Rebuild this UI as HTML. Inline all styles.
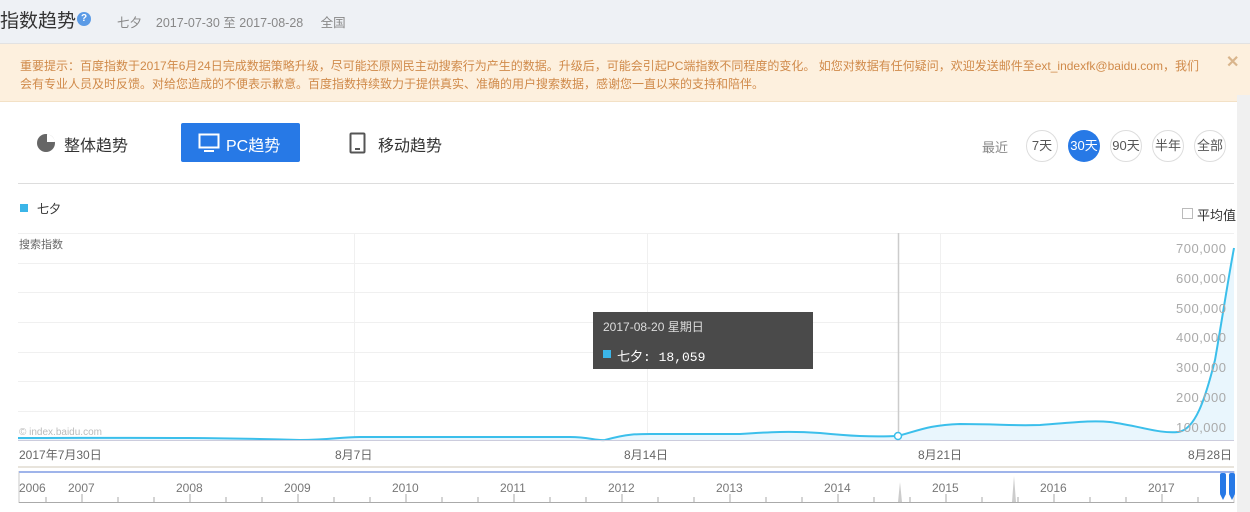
<!DOCTYPE html>
<html><head><meta charset="utf-8"><style>
*{margin:0;padding:0;box-sizing:border-box}
body{width:1250px;height:512px;overflow:hidden;background:#fff;font-family:"Liberation Sans","Noto Sans CJK SC",sans-serif;position:relative;color:#333}
.a{position:absolute;white-space:nowrap}
</style></head><body>
<div class="a" style="left:0;top:0;width:1250px;height:44px;background:#eef1f5;border-bottom:1px solid #e2e2e2"></div>
<div class="a" style="left:0;top:6px;font-size:19px;color:#333">指数趋势</div>
<div class="a" style="left:77px;top:12px;width:14px;height:14px;border-radius:50%;background:#5b9be6;color:#fff;font-size:10px;text-align:center;line-height:14px;font-weight:bold">?</div>
<div class="a" style="left:117px;top:12px;font-size:12.5px;color:#888">七夕&nbsp;&nbsp;&nbsp;&nbsp;2017-07-30 至 2017-08-28&nbsp;&nbsp;&nbsp;&nbsp;&nbsp;全国</div>
<div class="a" style="left:0;top:44px;width:1250px;height:58px;background:#fdf0de;border-bottom:1px solid #f3e1c6"></div>
<div class="a" style="left:20px;top:57px;font-size:12px;color:#d08a4a;line-height:18px">重要提示：百度指数于2017年6月24日完成数据策略升级，尽可能还原网民主动搜索行为产生的数据。升级后，可能会引起PC端指数不同程度的变化。 如您对数据有任何疑问，欢迎发送邮件至ext_indexfk@baidu.com，我们<br>会有专业人员及时反馈。对给您造成的不便表示歉意。百度指数持续致力于提供真实、准确的用户搜索数据，感谢您一直以来的支持和陪伴。</div>
<div class="a" style="left:1226px;top:52px;font-size:16px;color:#d9b58c;font-weight:bold">✕</div>
<svg class="a" style="left:36px;top:133px" width="20" height="20"><circle cx="10" cy="10" r="9" fill="#666"/><path d="M11 1 A9 9 0 0 1 19 9 L11 9Z" fill="#fff"/><path d="M12 0 L12 8 L20 8" fill="#fff"/></svg>
<div class="a" style="left:64px;top:132px;font-size:16px;color:#333">整体趋势</div>
<div class="a" style="left:181px;top:123px;width:119px;height:39px;background:#2779e6;border-radius:2px"></div>
<svg class="a" style="left:198px;top:133px" width="22" height="20"><rect x="1.5" y="1.5" width="19" height="13" fill="none" stroke="#fff" stroke-width="2"/><rect x="6" y="17" width="10" height="2" fill="#fff"/></svg>
<div class="a" style="left:226px;top:132px;font-size:16px;color:#fff">PC趋势</div>
<svg class="a" style="left:349px;top:132px" width="18" height="22"><rect x="1.5" y="1.5" width="14" height="19" rx="1" fill="none" stroke="#555" stroke-width="2"/><rect x="6" y="16" width="5" height="2" fill="#555"/></svg>
<div class="a" style="left:378px;top:132px;font-size:16px;color:#333">移动趋势</div>
<div class="a" style="left:982px;top:137px;font-size:13px;color:#888">最近</div>
<div class="a" style="left:1026px;top:130px;width:32px;height:32px;border:1px solid #ddd;border-radius:50%;font-size:13px;line-height:30px;text-align:center;color:#555">7天</div>
<div class="a" style="left:1068px;top:130px;width:32px;height:32px;background:#2779e6;border-radius:50%;font-size:13px;line-height:32px;text-align:center;color:#fff">30天</div>
<div class="a" style="left:1110px;top:130px;width:32px;height:32px;border:1px solid #ddd;border-radius:50%;font-size:13px;line-height:30px;text-align:center;color:#555">90天</div>
<div class="a" style="left:1152px;top:130px;width:32px;height:32px;border:1px solid #ddd;border-radius:50%;font-size:13px;line-height:30px;text-align:center;color:#555">半年</div>
<div class="a" style="left:1194px;top:130px;width:32px;height:32px;border:1px solid #ddd;border-radius:50%;font-size:13px;line-height:30px;text-align:center;color:#555">全部</div>
<div class="a" style="left:18px;top:183px;width:1216px;height:1px;background:#ddd"></div>
<div class="a" style="left:20px;top:204px;width:8px;height:8px;background:#3bb5e8"></div>
<div class="a" style="left:37px;top:200px;font-size:12px;color:#333">七夕</div>
<div class="a" style="left:1182px;top:208px;width:11px;height:11px;border:1px solid #bbb"></div>
<div class="a" style="left:1197px;top:205px;font-size:13px;color:#333">平均值</div>
<div class="a" style="left:19px;top:236px;font-size:11px;color:#666">搜索指数</div>
<svg class="a" style="left:0;top:0" width="1250" height="512">
<g stroke="#f0f0f0" stroke-width="1">
<line x1="18" y1="233.5" x2="1234" y2="233.5"/><line x1="18" y1="263.5" x2="1234" y2="263.5"/><line x1="18" y1="292.5" x2="1234" y2="292.5"/><line x1="18" y1="322.5" x2="1234" y2="322.5"/><line x1="18" y1="352.5" x2="1234" y2="352.5"/><line x1="18" y1="381.5" x2="1234" y2="381.5"/><line x1="18" y1="411.5" x2="1234" y2="411.5"/>
<line x1="354.5" y1="233" x2="354.5" y2="440"/><line x1="647.5" y1="233" x2="647.5" y2="440"/><line x1="940.5" y1="233" x2="940.5" y2="440"/>
</g>
<path d="M18 438 C120 438 200 437 300 440 C330 440 340 437 360 437 L570 437 C590 437 595 441 605 440 C630 433 640 434 660 434 L740 434 C770 432 790 431 820 433 C850 436 870 437 898 436 C920 430 930 425 960 424 C1000 424 1010 426 1040 425 C1070 423 1090 420 1110 422 C1140 426 1160 434 1178 432 C1195 430 1205 400 1215 360 C1222 320 1228 280 1234 248 L1234 440 L18 440Z" fill="#e9f6fd"/>
<path d="M18 438 C120 438 200 437 300 440 C330 440 340 437 360 437 L570 437 C590 437 595 441 605 440 C630 433 640 434 660 434 L740 434 C770 432 790 431 820 433 C850 436 870 437 898 436 C920 430 930 425 960 424 C1000 424 1010 426 1040 425 C1070 423 1090 420 1110 422 C1140 426 1160 434 1178 432 C1195 430 1205 400 1215 360 C1222 320 1228 280 1234 248" fill="none" stroke="#3bbfeb" stroke-width="2"/>
<line x1="18" y1="440.5" x2="1234" y2="440.5" stroke="#ccd" stroke-width="1"/>
<line x1="898.5" y1="233" x2="898.5" y2="440" stroke="#ccc" stroke-width="1.5"/>
<circle cx="898" cy="436" r="3.5" fill="#fff" stroke="#3bbfeb" stroke-width="1.5"/>
<rect x="18" y="466" width="1216" height="2" fill="#e8e4dc"/>
<rect x="19" y="471.5" width="1215" height="31" fill="#fff" stroke="#c8c8c8"/>
<rect x="19" y="471" width="1215" height="2" fill="#9fb4ea"/>
<line x1="19" y1="502.5" x2="1234" y2="502.5" stroke="#aaa"/>
<g stroke="#aaa">
<line x1="46" y1="497" x2="46" y2="502"/><line x1="82" y1="494" x2="82" y2="502"/><line x1="118" y1="497" x2="118" y2="502"/><line x1="154" y1="497" x2="154" y2="502"/><line x1="190" y1="494" x2="190" y2="502"/><line x1="226" y1="497" x2="226" y2="502"/><line x1="262" y1="497" x2="262" y2="502"/><line x1="298" y1="494" x2="298" y2="502"/><line x1="334" y1="497" x2="334" y2="502"/><line x1="370" y1="497" x2="370" y2="502"/><line x1="406" y1="494" x2="406" y2="502"/><line x1="442" y1="497" x2="442" y2="502"/><line x1="478" y1="497" x2="478" y2="502"/><line x1="514" y1="494" x2="514" y2="502"/><line x1="550" y1="497" x2="550" y2="502"/><line x1="586" y1="497" x2="586" y2="502"/><line x1="622" y1="494" x2="622" y2="502"/><line x1="658" y1="497" x2="658" y2="502"/><line x1="694" y1="497" x2="694" y2="502"/><line x1="730" y1="494" x2="730" y2="502"/><line x1="766" y1="497" x2="766" y2="502"/><line x1="802" y1="497" x2="802" y2="502"/><line x1="838" y1="494" x2="838" y2="502"/><line x1="874" y1="497" x2="874" y2="502"/><line x1="910" y1="497" x2="910" y2="502"/><line x1="946" y1="494" x2="946" y2="502"/><line x1="982" y1="497" x2="982" y2="502"/><line x1="1018" y1="497" x2="1018" y2="502"/><line x1="1054" y1="494" x2="1054" y2="502"/><line x1="1090" y1="497" x2="1090" y2="502"/><line x1="1126" y1="497" x2="1126" y2="502"/><line x1="1162" y1="494" x2="1162" y2="502"/><line x1="1198" y1="497" x2="1198" y2="502"/>
</g>
<path d="M898 502 L900 482 L902 502Z M1012 502 L1014 476 L1016 502Z" fill="#ccc"/>
<rect x="1220" y="473" width="6" height="22" rx="2" fill="#2779e6"/><path d="M1220 494 L1223 500 L1226 494Z" fill="#2779e6"/>
<rect x="1229" y="473" width="6" height="22" rx="2" fill="#2779e6"/><path d="M1229 494 L1232 500 L1235 494Z" fill="#2779e6"/>
</svg>
<div class="a" style="left:1176px;top:241px;font-size:13px;color:#aaa;letter-spacing:0.5px">700,000</div>
<div class="a" style="left:1176px;top:271px;font-size:13px;color:#aaa;letter-spacing:0.5px">600,000</div>
<div class="a" style="left:1176px;top:301px;font-size:13px;color:#aaa;letter-spacing:0.5px">500,000</div>
<div class="a" style="left:1176px;top:330px;font-size:13px;color:#aaa;letter-spacing:0.5px">400,000</div>
<div class="a" style="left:1176px;top:360px;font-size:13px;color:#aaa;letter-spacing:0.5px">300,000</div>
<div class="a" style="left:1176px;top:390px;font-size:13px;color:#aaa;letter-spacing:0.5px">200,000</div>
<div class="a" style="left:1176px;top:420px;font-size:13px;color:#aaa;letter-spacing:0.5px">100,000</div>
<div class="a" style="left:19px;top:427px;font-size:10px;color:#bbb">© index.baidu.com</div>
<div class="a" style="left:19px;top:446px;font-size:12px;color:#666">2017年7月30日</div>
<div class="a" style="left:335px;top:446px;font-size:12px;color:#666">8月7日</div>
<div class="a" style="left:624px;top:446px;font-size:12px;color:#666">8月14日</div>
<div class="a" style="left:918px;top:446px;font-size:12px;color:#666">8月21日</div>
<div class="a" style="left:1188px;top:446px;font-size:12px;color:#666">8月28日</div>
<div class="a" style="left:593px;top:312px;width:220px;height:57px;background:#4a4a4a"></div>
<div class="a" style="left:603px;top:318px;font-size:12px;color:#ddd">2017-08-20 星期日</div>
<div class="a" style="left:603px;top:350px;width:8px;height:8px;background:#3bb5e8"></div>
<div class="a" style="left:617px;top:346px;font-size:13px;color:#fff;font-family:'Liberation Mono','Noto Sans CJK SC',monospace">七夕: 18,059</div>
<div class="a" style="left:19px;top:481px;font-size:12px;color:#777">2006</div>
<div class="a" style="left:68px;top:481px;font-size:12px;color:#777">2007</div>
<div class="a" style="left:176px;top:481px;font-size:12px;color:#777">2008</div>
<div class="a" style="left:284px;top:481px;font-size:12px;color:#777">2009</div>
<div class="a" style="left:392px;top:481px;font-size:12px;color:#777">2010</div>
<div class="a" style="left:500px;top:481px;font-size:12px;color:#777">2011</div>
<div class="a" style="left:608px;top:481px;font-size:12px;color:#777">2012</div>
<div class="a" style="left:716px;top:481px;font-size:12px;color:#777">2013</div>
<div class="a" style="left:824px;top:481px;font-size:12px;color:#777">2014</div>
<div class="a" style="left:932px;top:481px;font-size:12px;color:#777">2015</div>
<div class="a" style="left:1040px;top:481px;font-size:12px;color:#777">2016</div>
<div class="a" style="left:1148px;top:481px;font-size:12px;color:#777">2017</div>
<div class="a" style="left:1237px;top:95px;width:13px;height:417px;background:#f0f0f0"></div>
</body></html>
